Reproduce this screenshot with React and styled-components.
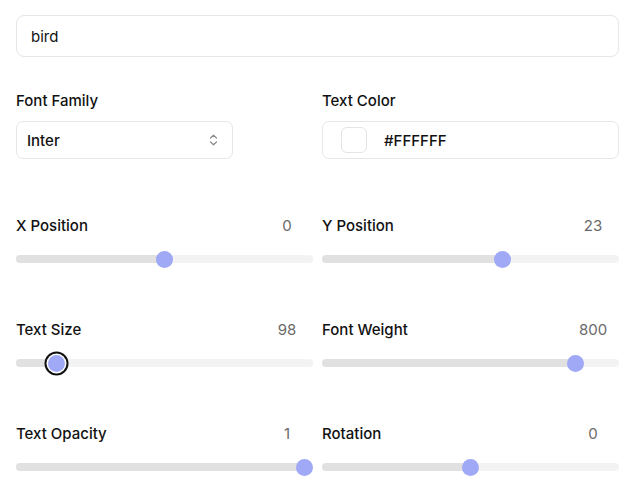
import React from "react";
import styled, { createGlobalStyle } from "styled-components";

const Global = createGlobalStyle`
  html, body { margin: 0; padding: 0; background: #fff; }
  body { font-family: Inter, "Noto Sans", sans-serif; color: #111; }
  * { box-sizing: border-box; }
`;

const Page = styled.div`
  padding: 15px 21px 0 16px;
  display: flex;
  flex-direction: column;
`;

const TextInput = styled.div`
  height: 42px;
  border: 1px solid #e6e6e6;
  border-radius: 8px;
  display: flex;
  align-items: center;
  padding-left: 14px;
  font-size: 15px;
  color: #111;
`;

const TwoCol = styled.div`
  display: grid;
  grid-template-columns: 1fr 1fr;
  column-gap: ${(p) => p.$gap || 9}px;
  row-gap: ${(p) => p.$rowGap || 0}px;
  margin-top: ${(p) => p.$top}px;
`;

const Field = styled.div`
  display: flex;
  flex-direction: column;
  align-items: flex-start;
`;

const Label = styled.div`
  font-size: 15px;
  line-height: 20px;
  font-weight: 500;
  color: #111;
  padding-top: 1px;
`;

const Select = styled.div`
  margin-top: 10px;
  width: 217px;
  height: 38px;
  border: 1px solid #e6e6e6;
  border-radius: 7px;
  display: flex;
  align-items: center;
  justify-content: space-between;
  padding: 0 14px 0 10px;
  font-size: 15px;
  font-weight: 500;
`;

const ColorBox = styled.div`
  margin-top: 10px;
  width: 100%;
  height: 38px;
  border: 1px solid #e6e6e6;
  border-radius: 7px;
  display: flex;
  align-items: center;
  gap: 17px;
  padding-left: 18px;
  font-size: 15px;
  font-weight: 500;
`;

const Swatch = styled.div`
  width: 26px;
  height: 26px;
  border: 1px solid #e4e4e4;
  border-radius: 6px;
  background: ${(p) => p.$color};
`;

const SliderBlock = styled.div`
  display: flex;
  flex-direction: column;
  gap: 14px;
`;

const Header = styled.div`
  display: flex;
  justify-content: space-between;
  align-items: center;
`;

const Value = styled.div`
  width: 52px;
  text-align: center;
  font-size: 15px;
  line-height: 20px;
  padding-top: 1px;
  color: #6a6a6a;
`;

const TrackArea = styled.div`
  position: relative;
  height: 18px;
  display: flex;
  align-items: center;
`;

const Track = styled.div`
  width: 100%;
  height: 8px;
  border-radius: 4px;
  background: #f3f3f3;
  overflow: hidden;
`;

const Fill = styled.div`
  height: 100%;
  background: #e1e1e1;
`;

const Thumb = styled.div`
  position: absolute;
  top: 50%;
  width: 17px;
  height: 17px;
  margin-left: -8.5px;
  margin-top: -8.5px;
  border-radius: 50%;
  background: #9fa9f5;
  box-shadow: ${(p) =>
    p.$focused ? "0 0 0 1.5px #fff, 0 0 0 3.5px #111" : "none"};
`;

function Chevrons() {
  return (
    <svg width="9" height="12" viewBox="0 0 9 12" fill="none" stroke="#8a8a8a" strokeWidth="1.2" strokeLinecap="round" strokeLinejoin="round">
      <path d="M1.5 4 L4.5 1.2 L7.5 4" />
      <path d="M1.5 8 L4.5 10.8 L7.5 8" />
    </svg>
  );
}

function Slider({ label, value, frac, focused }) {
  const center = `calc(8.5px + (100% - 17px) * ${frac})`;
  return (
    <SliderBlock>
      <Header>
        <Label>{label}</Label>
        <Value>{value}</Value>
      </Header>
      <TrackArea>
        <Track>
          <Fill style={{ width: center }} />
        </Track>
        <Thumb $focused={focused} style={{ left: center }} />
      </TrackArea>
    </SliderBlock>
  );
}

const sliders = [
  { label: "X Position", value: "0", frac: 0.5 },
  { label: "Y Position", value: "23", frac: 0.616 },
  { label: "Text Size", value: "98", frac: 0.1125, focused: true },
  { label: "Font Weight", value: "800", frac: 0.875 },
  { label: "Text Opacity", value: "1", frac: 1 },
  { label: "Rotation", value: "0", frac: 0.5 },
];

export default function App() {
  return (
    <>
      <Global />
      <Page>
        <TextInput>bird</TextInput>
        <TwoCol $top={33}>
          <Field>
            <Label>Font Family</Label>
            <Select>
              <span>Inter</span>
              <Chevrons />
            </Select>
          </Field>
          <Field>
            <Label>Text Color</Label>
            <ColorBox>
              <Swatch $color="#ffffff" />
              <span>#FFFFFF</span>
            </ColorBox>
          </Field>
        </TwoCol>
        <TwoCol $top={56} $rowGap={51}>
          {sliders.map((s) => (
            <Slider key={s.label} {...s} />
          ))}
        </TwoCol>
      </Page>
    </>
  );
}
